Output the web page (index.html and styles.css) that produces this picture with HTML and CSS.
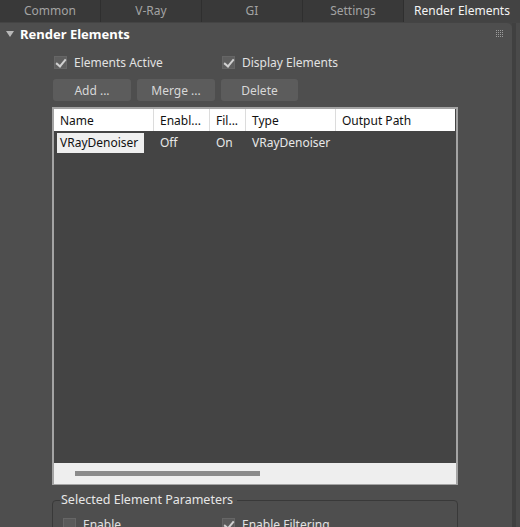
FILE: index.html
```html
<!DOCTYPE html>
<html lang="en">
<head>
    <meta charset="UTF-8">
    <title>Render Elements</title>
    <link rel="stylesheet" href="styles.css">
</head>
<body>
    <div class="tabs">
        <div class="tab">Common</div>
        <div class="tab">V-Ray</div>
        <div class="tab">GI</div>
        <div class="tab">Settings</div>
        <div class="tab tab-active">Render Elements</div>
    </div>

    <div class="main">
        <div class="rollout">
            <div class="rollout_head">
                <span class="arrow"></span>
                <span class="rollout_title">Render Elements</span>
                <svg class="grip" width="7" height="7" viewBox="0 0 7 7">
                    <g fill="#9c9c9c">
                        <rect x="0" y="0" width="1" height="1"/><rect x="2" y="0" width="1" height="1"/><rect x="4" y="0" width="1" height="1"/><rect x="6" y="0" width="1" height="1"/>
                        <rect x="0" y="2" width="1" height="1"/><rect x="2" y="2" width="1" height="1"/><rect x="4" y="2" width="1" height="1"/><rect x="6" y="2" width="1" height="1"/>
                        <rect x="0" y="4" width="1" height="1"/><rect x="2" y="4" width="1" height="1"/><rect x="4" y="4" width="1" height="1"/><rect x="6" y="4" width="1" height="1"/>
                        <rect x="0" y="6" width="1" height="1"/><rect x="2" y="6" width="1" height="1"/><rect x="4" y="6" width="1" height="1"/><rect x="6" y="6" width="1" height="1"/>
                    </g>
                </svg>
            </div>

            <div class="row row-checks">
                <label class="check on"><span class="box"></span>Elements Active</label>
                <label class="check on"><span class="box"></span>Display Elements</label>
            </div>

            <div class="row row-buttons">
                <button class="btn">Add ...</button>
                <button class="btn">Merge ...</button>
                <button class="btn">Delete</button>
            </div>

            <div class="list">
                <div class="list_head">
                    <div class="col c-name">Name</div>
                    <div class="col c-en">Enabl...</div>
                    <div class="col c-fil">Fil...</div>
                    <div class="col c-type">Type</div>
                    <div class="col c-out">Output Path</div>
                </div>
                <div class="list_row">
                    <div class="col c-name"><span class="sel">VRayDenoiser</span></div>
                    <div class="col c-en">Off</div>
                    <div class="col c-fil">On</div>
                    <div class="col c-type">VRayDenoiser</div>
                    <div class="col c-out"></div>
                </div>
                <div class="list_fill"></div>
                <div class="hscroll"><span class="thumb"></span></div>
            </div>

            <fieldset class="group">
                <legend>Selected Element Parameters</legend>
                <div class="row row-checks2">
                    <label class="check"><span class="box"></span>Enable</label>
                    <label class="check on"><span class="box"></span>Enable Filtering</label>
                </div>
            </fieldset>
        </div>
        <div class="side"></div>
    </div>
</body>
</html>
```
FILE: styles.css
```css
*{margin: 0;padding: 0;box-sizing: border-box;}
body{
    width: 520px;
    height: 527px;
    overflow: hidden;
    background: #444444;
    font-family: 'Noto Sans', 'Open Sans', sans-serif;
    font-size: 12px;
    color: #dcdcdc;
}

/* tab strip */
.tabs{
    display: flex;
    height: 22px;
    background: #393939;
}
.tab{
    width: 101px;
    line-height: 21px;
    text-align: center;
    color: #a3a3a3;
    border-right: 1px solid #2f2f2f;
}
.tab-active{
    flex: 1;
    border-right: 0;
    background: #434343;
    color: #f4f4f4;
}

.main{
    display: flex;
    height: 505px;
    padding-top: 1px;
}
.rollout{
    width: 512px;
    background: #4e4e4e;
    border-radius: 0 5px 0 0;
}
.side{
    width: 8px;
    border-left: 4px solid #404040;
    background: #4a4a4a;
}

.rollout_head{
    display: flex;
    align-items: center;
    height: 22px;
    position: relative;
}
.arrow{
    width: 0;
    height: 0;
    margin: 0 6px 0 6px;
    border-left: 4px solid transparent;
    border-right: 4px solid transparent;
    border-top: 6px solid #b8b8b8;
}
.rollout_title{
    font-weight: bold;
    color: #ffffff;
    font-size: 13px;
}
.grip{
    position: absolute;
    right: 9px;
    top: 7px;
}

.row{display: flex;}
.row-checks{
    margin: 11px 0 0 54px;
    height: 13px;
}
.check{
    display: flex;
    align-items: center;
    gap: 7px;
    line-height: 13px;
    color: #e2e2e2;
}
.row-checks .check:first-child{width: 168px;}
.box{
    width: 13px;
    height: 13px;
    background: #5e5e5e;
    border: 1px solid #666;
    position: relative;
}
.check.on .box::after{
    content: '';
    position: absolute;
    left: 3px;
    top: 0px;
    width: 4px;
    height: 8px;
    border-right: 2px solid #d0d0d0;
    border-bottom: 2px solid #d0d0d0;
    transform: rotate(40deg);
}

.row-buttons{
    margin: 10px 0 0 53px;
    gap: 6px;
}
.btn{
    width: 78px;
    height: 22px;
    border: 0;
    border-radius: 3px;
    background: #5c5c5c;
    color: #d8d8d8;
    font-family: inherit;
    font-size: 12px;
}
.btn:last-child{width: 77px;}

.list{
    margin: 6px 0 0 52px;
    width: 406px;
    height: 378px;
    border: 2px solid #a4a4a4;
    border-bottom-width: 1px;
    background: #444444;
    display: flex;
    flex-direction: column;
}
.list_head, .list_row{
    display: flex;
    height: 22px;
    line-height: 23px;
}
.list_head{
    background: #ffffff;
    color: #111;
    margin-right: 1px;
}
.list_head .col{border-right: 1px solid #dcdcdc;}
.list_head .col:last-child{border-right: 0;}
.col{padding-left: 6px;white-space: nowrap;overflow: hidden;}
.c-name{width: 100px;}
.c-en{width: 56px;}
.c-fil{width: 36px;}
.c-type{width: 90px;}
.c-out{flex: 1;}
.list_row{color: #e8e8e8;}
.list_row .c-name{padding-left: 3px;}
.sel{
    display: inline-block;
    background: #efefef;
    color: #111;
    padding: 0 6px 0 3px;
    line-height: 20px;
}
.list_fill{flex: 1;}
.hscroll{
    height: 21px;
    background: #eeeeee;
    padding: 8px 0 0 21px;
}
.thumb{
    display: block;
    width: 185px;
    height: 5px;
    background: #8a8a8a;
}

.group{
    margin: 8px 0 0 52px;
    width: 406px;
    height: 40px;
    border: 1px solid #393939;
    border-radius: 4px;
    padding: 0 0 0 10px;
}
.group legend{
    margin-left: -3px;
    padding: 0 4px 0 1px;
    color: #e6e6e6;
    font-size: 12.5px;
    line-height: 14px;
}
.row-checks2{margin-top: 11px;}
.row-checks2 .check:first-child{width: 159px;}
.row-checks2 .box{background: #5a5a5a;}
```
